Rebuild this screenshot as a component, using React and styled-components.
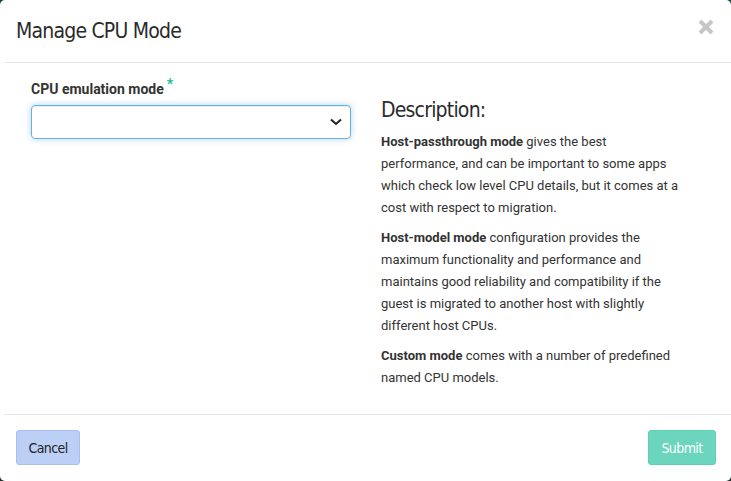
import React from "react";
import styled, { createGlobalStyle } from "styled-components";

const GlobalStyle = createGlobalStyle`
  html, body {
    margin: 0;
    padding: 0;
    height: 100%;
  }
  body {
    background: linear-gradient(180deg, #0d4a3e 0%, #1f2f2b 100%);
    font-family: Roboto, "Liberation Sans", sans-serif;
    color: #333;
    overflow: hidden;
  }
  #root {
    height: 100%;
  }
`;

const condensed = `"DejaVu Sans Condensed", "DejaVu Sans", sans-serif`;

const Modal = styled.div`
  height: 481px;
  box-sizing: border-box;
  background: #fff;
  border-radius: 5px;
  display: flex;
  flex-direction: column;
`;

const Header = styled.div`
  height: 62px;
  margin-left: 5px;
  padding: 0 16px 0 11px;
  border-bottom: 1px solid #e5e5e5;
  display: flex;
  align-items: center;
  justify-content: space-between;
`;

const Title = styled.h4`
  margin: 0;
  font-family: ${condensed};
  font-stretch: condensed;
  font-weight: 400;
  font-size: 21px;
  letter-spacing: -0.8px;
  color: #2b2b2b;
`;

const Close = styled.button`
  border: 0;
  background: none;
  padding: 0;
  width: 18px;
  height: 18px;
  margin-top: -8px;
  cursor: pointer;
`;

const Body = styled.div`
  flex: 1;
  padding: 13px 16px 0 31px;
  display: grid;
  grid-template-columns: 320px 1fr;
  column-gap: 30px;
  align-items: start;
`;

const Label = styled.label`
  display: block;
  font-size: 14px;
  font-weight: 700;
  color: #333;
  margin-bottom: 8px;
`;

const Req = styled.span`
  color: #1abc9c;
  font-size: 14px;
  vertical-align: 5px;
  margin-left: 3px;
`;

const SelectBox = styled.div`
  height: 34px;
  box-sizing: border-box;
  border: 1px solid #66afe9;
  border-radius: 4px;
  box-shadow: inset 0 1px 1px rgba(0, 0, 0, 0.075), 0 0 6px rgba(102, 175, 233, 0.5);
  display: flex;
  align-items: center;
  justify-content: flex-end;
  padding-right: 7px;
`;

const Right = styled.div`
  padding-top: 22px;
`;

const DescTitle = styled.h3`
  margin: 0 0 9px;
  font-family: ${condensed};
  font-stretch: condensed;
  font-weight: 400;
  font-size: 21px;
  letter-spacing: -0.8px;
  color: #2b2b2b;
`;

const Para = styled.p`
  margin: 0 0 8px;
  font-size: 13px;
  line-height: 22px;
  color: #333;
  white-space: nowrap;
  b {
    font-weight: 700;
  }
`;

const Footer = styled.div`
  margin-left: 4px;
  border-top: 1px solid #e5e5e5;
  height: 67px;
  padding: 15px 15px 0 12px;
  display: flex;
  justify-content: space-between;
  align-items: flex-start;
  box-sizing: border-box;
`;

const Button = styled.button`
  width: ${(p) => (p.$primary ? "68px" : "64px")};
  height: 35px;
  padding: 0;
  border-radius: 3px;
  font-family: ${condensed};
  font-stretch: condensed;
  font-size: 14px;
  letter-spacing: -0.6px;
  border: 1px solid ${(p) => (p.$primary ? "#5fcfb5" : "#a6bff0")};
  background: ${(p) => (p.$primary ? "#6bd5bd" : "#bcd0f6")};
  color: ${(p) => (p.$primary ? "#fff" : "#222")};
`;

export default function App() {
  return (
    <>
      <GlobalStyle />
      <Modal>
        <Header>
          <Title>Manage CPU Mode</Title>
          <Close aria-label="Close">
            <svg width="18" height="18" viewBox="0 0 18 18">
              <path d="M3 3 L15 15 M15 3 L3 15" stroke="#c6c6c6" strokeWidth="4" strokeLinecap="butt" />
            </svg>
          </Close>
        </Header>
        <Body>
          <div>
            <Label>
              CPU emulation mode<Req>*</Req>
            </Label>
            <SelectBox>
              <svg width="14" height="10" viewBox="0 0 14 10">
                <path d="M2 2.5 L7 7 L12 2.5" stroke="#222" strokeWidth="2" fill="none" />
              </svg>
            </SelectBox>
          </div>
          <Right>
            <DescTitle>Description:</DescTitle>
            <Para>
              <b>Host-passthrough mode</b> gives the best
              <br />
              performance, and can be important to some apps
              <br />
              which check low level CPU details, but it comes at a
              <br />
              cost with respect to migration.
            </Para>
            <Para>
              <b>Host-model mode</b> configuration provides the
              <br />
              maximum functionality and performance and
              <br />
              maintains good reliability and compatibility if the
              <br />
              guest is migrated to another host with slightly
              <br />
              different host CPUs.
            </Para>
            <Para>
              <b>Custom mode</b> comes with a number of predefined
              <br />
              named CPU models.
            </Para>
          </Right>
        </Body>
        <Footer>
          <Button>Cancel</Button>
          <Button $primary>Submit</Button>
        </Footer>
      </Modal>
    </>
  );
}
